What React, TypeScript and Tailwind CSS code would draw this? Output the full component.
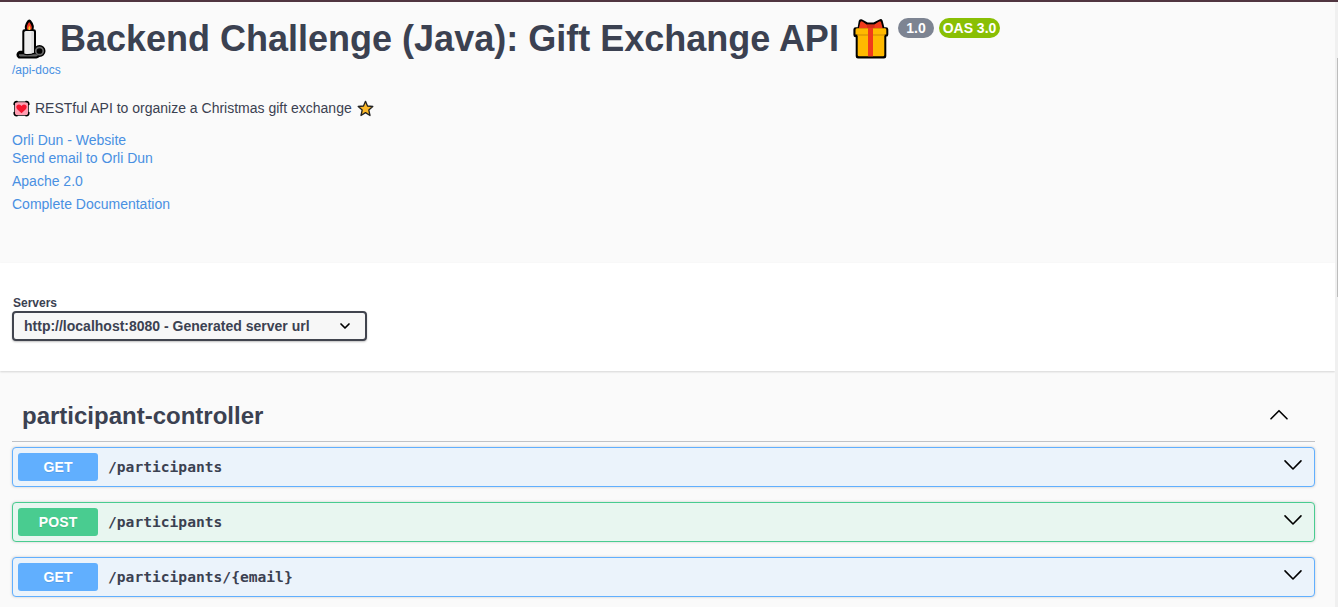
type Operation = { method: 'GET' | 'POST'; path: string };

const operations: Operation[] = [
  { method: 'GET', path: '/participants' },
  { method: 'POST', path: '/participants' },
  { method: 'GET', path: '/participants/{email}' },
];

function Candle() {
  return (
    <svg className="h-[42px] w-[31px] shrink-0" viewBox="0 0 31 42">
      <g fill="#000" stroke="#000" strokeWidth="4.400" strokeLinejoin="round">
        <path d="M9.500 13.500 H18.800 V36 H9.500Z" />
        <path d="M14.200 3.800 Q11 8 12.500 12 H16 Q17.800 8 14.200 3.800Z" />
        <path d="M9 35 H5 Q2.500 36.500 4.500 38.300 H21 Q23 38 23.500 36 H9Z" />
        <circle cx="24.500" cy="33" r="3.800" />
      </g>
      <path d="M9.300 14.500 Q9.300 13 10.800 13 H17.500 Q19 13 19 14.500 V34.500 Q14 37 9.300 35.500Z" fill="#eeeeee" />
      <path d="M16.200 13.500 H19 V34.500 L16.200 35.500Z" fill="#dddddd" />
      <path d="M4 36.300 H8.500 Q11 38 19 36.300 H21 L23 37 Q22 38.500 20.500 38.500 H5 Q3.500 38 4 36.300Z" fill="#636363" />
      <circle cx="24.500" cy="33" r="3.700" fill="none" stroke="#686868" strokeWidth="1.700" />
      <path d="M14.200 4 Q11 8 12 11.500 H16.500 Q17.700 8 14.200 4Z" fill="#ee3622" />
      <path d="M14.300 7.500 Q12.700 10 13.500 12 H15.200 Q16.200 10 14.300 7.500Z" fill="#ffc42e" />
    </svg>
  );
}

function Gift() {
  return (
    <svg className="h-[42px] w-[36px] shrink-0" viewBox="0 0 36 42">
      <g fill="#000" stroke="#000" strokeWidth="4.600" strokeLinejoin="round">
        <path d="M7 9.500 L8 3.500 L14 6.800 H21 L27.500 3.500 L29 9.500Z" />
        <path d="M2.700 11.500 H33 V16.500 H31 V38.200 H5 V17 H2.700Z" />
      </g>
      <path d="M5.800 10.500 L7.300 4.300 Q7.900 2.500 9.700 3.700 L14 6.800 H21 L25.700 3.700 Q27.500 2.500 28.100 4.300 L29.700 10.500Z" fill="#f03b1b" />
      <path d="M4 10.200 H32 Q33.300 10.200 33.300 11.700 V16.500 H31.300 V37 Q31.300 38.300 30 38.300 H6 Q4.700 38.300 4.700 37 V16.500 H2.500 V11.700 Q2.500 10.200 4 10.200Z" fill="#ffb900" />
      <path d="M4.500 16 H31.500 V18 H4.500Z" fill="#e6a102" />
      <path d="M15 9 H20 V38.300 H15Z" fill="#f03b1b" />
      <path d="M14 6.500 H21.500 V9.800 H14Z" fill="#d42e18" />
    </svg>
  );
}

function Heart() {
  return (
    <svg className="h-[17px] w-[17px] shrink-0" viewBox="0 0 17 17">
      <rect x="1.500" y="1.800" width="14" height="13.700" rx="1.500" fill="#ff9fb2" stroke="#444" strokeWidth="1" />
      <path d="M1.200 4.500 Q1 1.500 4 1.500 M13 1.500 Q16 1.500 15.800 4.500 M15.800 12.500 Q16 15.800 13 15.800 M4 15.800 Q1 15.800 1.200 12.500" fill="none" stroke="#000" strokeWidth="1.600" strokeLinecap="round" />
      <path d="M8.500 13.300 L4 9 Q2.300 5.900 4.800 4.700 Q7.300 3.900 8.500 6 Q9.700 3.900 12.200 4.700 Q14.700 5.900 13 9Z" fill="#f4142d" />
    </svg>
  );
}

function Star() {
  return (
    <svg className="h-[17px] w-[17px] shrink-0" viewBox="0 0 17 17">
      <path d="M8.500 1.300 L10.500 6 L15.800 6.500 L11.800 10 L13 15.500 L8.500 12.600 L4 15.500 L5.200 10 L1.200 6.500 L6.500 6Z" fill="#fbb829" stroke="#222" strokeWidth="1.300" strokeLinejoin="round" />
    </svg>
  );
}

function Chevron({ up = false }: { up?: boolean }) {
  return (
    <svg className="h-[12px] w-[20px]" viewBox="0 0 20 12" fill="none" stroke="#000" strokeWidth="1.600" strokeLinecap="round" strokeLinejoin="round">
      <path d={up ? 'M2 9.800 L10 1.700 L18 9.800' : 'M2 1.900 L10 10 L18 1.900'} />
    </svg>
  );
}

function OperationRow({ method, path }: Operation) {
  const get = method === 'GET';
  return (
    <div
      className={`flex h-10 items-center rounded border pl-[5px] pr-[11px] shadow-[0_0_3px_rgba(0,0,0,0.19)] ${
        get ? 'border-[#61affe] bg-[#ebf3fb]' : 'border-[#49cc90] bg-[#e8f6f0]'
      }`}
    >
      <span
        className={`flex h-7 w-20 items-center justify-center rounded-[3px] text-[14px] font-bold tracking-[0.15px] text-white [text-shadow:0_1px_0_rgba(0,0,0,0.1)] ${
          get ? 'bg-[#61affe]' : 'bg-[#49cc90]'
        }`}
      >
        {method}
      </span>
      <span className="ml-2.5 flex-1 font-['DejaVu_Sans_Mono',monospace] text-[14.610px] font-bold">{path}</span>
      <span className="-mt-1">
        <Chevron />
      </span>
    </div>
  );
}

export default function App() {
  return (
    <div className="flex h-[607px] flex-col overflow-hidden bg-[#fafafa] font-['Liberation_Sans',Arial,sans-serif] text-[#3b4151]">
      <div className="h-0.5 shrink-0 bg-[#503540]" />
      <div className="flex min-h-0 flex-1">
        <main className="flex min-w-0 flex-1 flex-col">
          <header className="h-[261px] shrink-0 pl-3 pt-4">
            <div className="flex h-11 items-start">
              <div className="pl-[3px]">
                <Candle />
              </div>
              <h1 className="ml-[14px] w-[793px] whitespace-nowrap text-[36px] font-bold leading-[41px]">
                Backend Challenge (Java): Gift Exchange API
              </h1>
              <Gift />
              <span className="ml-[9px] flex h-5 w-9 items-center justify-center rounded-full bg-[#7d8492] text-[14px] font-bold text-white">1.0</span>
              <span className="ml-[5px] flex h-5 w-[61px] items-center justify-center whitespace-nowrap rounded-full bg-[#89bf04] text-[14px] font-bold text-white">OAS 3.0</span>
            </div>
            <a className="block h-4 text-[12px] leading-4 text-[#4990e2]">/api-docs</a>
            <p className="mt-5 flex h-5 items-center pl-[1px] text-[14px]">
              <Heart />
              <span className="ml-[5px] mr-[5px]">RESTful API to organize a Christmas gift exchange</span>
              <Star />
            </p>
            <div className="mt-[13px] text-[14px] leading-[18px] text-[#4990e2]">
              <a className="block">Orli Dun - Website</a>
              <a className="block">Send email to Orli Dun</a>
              <a className="mt-[5px] block">Apache 2.0</a>
              <a className="mt-[5px] block">Complete Documentation</a>
            </div>
          </header>
          <section className="h-[108px] shrink-0 bg-white pl-3 pt-8 shadow-[0_1px_2px_rgba(0,0,0,0.15)]">
            <div className="h-4 pl-[1px] text-[12px] font-bold leading-4">Servers</div>
            <div className="flex h-[30px] w-[355px] items-center justify-between rounded border-2 border-[#41444e] bg-[#f7f7f7] pl-2.5 pr-[14px] text-[14px] font-bold shadow-[0_1px_2px_rgba(0,0,0,0.25)]">
              <span>http://localhost:8080 - Generated server url</span>
              <svg className="h-3 w-3" viewBox="0 0 12 12" fill="none" stroke="#000" strokeWidth="1.700" strokeLinecap="round" strokeLinejoin="round">
                <path d="M2 4 L6 8 L10 4" />
              </svg>
            </div>
          </section>
          <section className="pl-3 pr-5 pt-[21px]">
            <div className="mb-[5px] flex h-[50px] items-center justify-between border-b border-[#3b4151]/30 pb-[3px] pl-2.5 pr-[26px]">
              <h2 className="pt-0.5 text-[24px] font-bold">participant-controller</h2>
              <Chevron up />
            </div>
            <div className="flex flex-col gap-[15px]">
              {operations.map((op) => (
                <OperationRow key={op.method + op.path} {...op} />
              ))}
            </div>
          </section>
        </main>
        <div className="w-[3px] shrink-0 bg-[#f0f0f0] pl-0.5 pt-14">
          <div className="h-[239px] bg-[#bcbcbc]" />
        </div>
      </div>
    </div>
  );
}
